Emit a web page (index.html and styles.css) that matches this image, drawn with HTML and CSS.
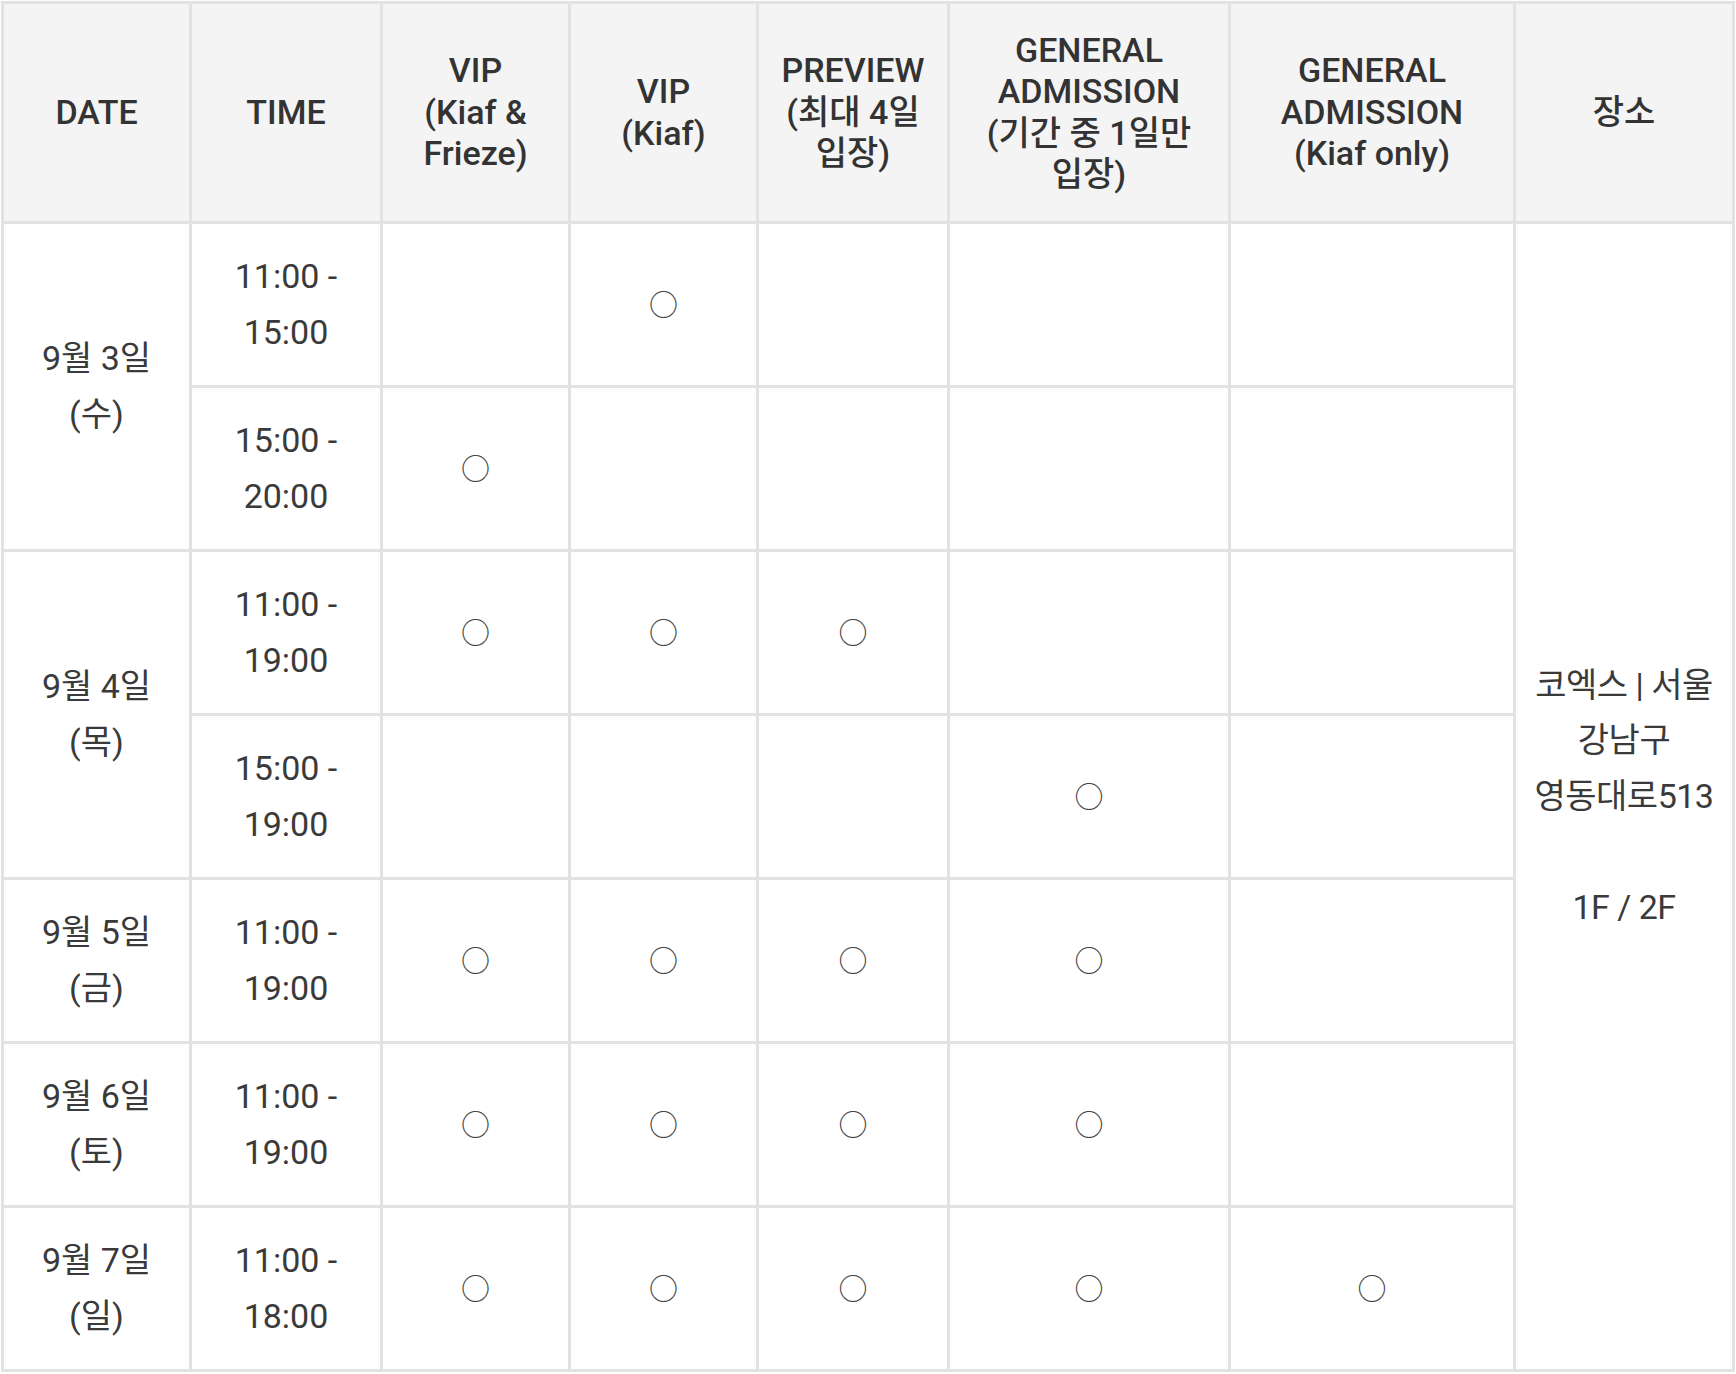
FILE: index.html
```html
<!DOCTYPE html>
<html lang="ko">
<head>
<meta charset="utf-8">
<title>Kiaf 일정</title>
<link rel="stylesheet" href="styles.css">
</head>
<body>
<table class="schedule">
  <colgroup>
    <col class="c-date">
    <col class="c-time">
    <col class="c-vip2">
    <col class="c-vip">
    <col class="c-prev">
    <col class="c-ga1">
    <col class="c-ga2">
    <col class="c-place">
  </colgroup>
  <thead>
    <tr class="head">
      <th>DATE</th>
      <th>TIME</th>
      <th>VIP<br>(Kiaf &amp; Frieze)</th>
      <th>VIP<br>(Kiaf)</th>
      <th>PREVIEW<br>(최대 4일 입장)</th>
      <th>GENERAL ADMISSION<br>(기간 중 1일만 입장)</th>
      <th>GENERAL ADMISSION<br>(Kiaf only)</th>
      <th>장소</th>
    </tr>
  </thead>
  <tbody>
    <tr class="row">
      <td rowspan="2">9월 3일 (수)</td>
      <td>11:00 - 15:00</td>
      <td></td>
      <td><span class="mark">○</span></td>
      <td></td>
      <td></td>
      <td></td>
      <td rowspan="7" class="place">코엑스 | 서울 강남구 영동대로513<br><br>1F / 2F</td>
    </tr>
    <tr class="row">
      <td>15:00 - 20:00</td>
      <td><span class="mark">○</span></td>
      <td></td>
      <td></td>
      <td></td>
      <td></td>
    </tr>
    <tr class="row">
      <td rowspan="2">9월 4일 (목)</td>
      <td>11:00 - 19:00</td>
      <td><span class="mark">○</span></td>
      <td><span class="mark">○</span></td>
      <td><span class="mark">○</span></td>
      <td></td>
      <td></td>
    </tr>
    <tr class="row">
      <td>15:00 - 19:00</td>
      <td></td>
      <td></td>
      <td></td>
      <td><span class="mark">○</span></td>
      <td></td>
    </tr>
    <tr class="row">
      <td>9월 5일 (금)</td>
      <td>11:00 - 19:00</td>
      <td><span class="mark">○</span></td>
      <td><span class="mark">○</span></td>
      <td><span class="mark">○</span></td>
      <td><span class="mark">○</span></td>
      <td></td>
    </tr>
    <tr class="row">
      <td>9월 6일 (토)</td>
      <td>11:00 - 19:00</td>
      <td><span class="mark">○</span></td>
      <td><span class="mark">○</span></td>
      <td><span class="mark">○</span></td>
      <td><span class="mark">○</span></td>
      <td></td>
    </tr>
    <tr class="row">
      <td>9월 7일 (일)</td>
      <td>11:00 - 18:00</td>
      <td><span class="mark">○</span></td>
      <td><span class="mark">○</span></td>
      <td><span class="mark">○</span></td>
      <td><span class="mark">○</span></td>
      <td><span class="mark">○</span></td>
    </tr>
  </tbody>
</table>
</body>
</html>
```
FILE: styles.css
```css
html, body {
  margin: 0;
  padding: 0;
  background: #ffffff;
}

body {
  padding: 1px 0 0 1px;
  font-family: "Roboto", "Noto Sans CJK KR", sans-serif;
  color: #3a3a3a;
}

.schedule {
  border-collapse: collapse;
  table-layout: fixed;
  width: 1734px;
  font-size: 34px;
}

.c-date { width: 188px; }
.c-time { width: 191px; }
.c-vip2 { width: 188px; }
.c-vip { width: 188px; }
.c-prev { width: 191px; }
.c-ga1 { width: 281px; }
.c-ga2 { width: 285px; }
.c-place { width: 219px; }

.schedule th,
.schedule td {
  border: 3px solid #e2e2e2;
  text-align: center;
  vertical-align: middle;
  padding: 0 22px;
  word-break: keep-all;
}

.schedule th {
  background: #f4f4f4;
  font-weight: 500;
  line-height: 41.5px;
  color: #333333;
}

.schedule td {
  font-weight: 400;
  line-height: 55.5px;
}

.schedule td.place {
  padding: 0 6px;
  letter-spacing: -0.5px;
}

.head { height: 220px; }
.row { height: 164px; }

.mark {
  font-family: "Noto Sans CJK KR", sans-serif;
  font-size: 29px;
  color: #444444;
}
```
